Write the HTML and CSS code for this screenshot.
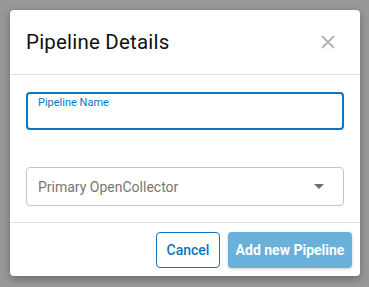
FILE: index.html
```html
<!DOCTYPE html>
<html lang="en">
<head>
  <meta charset="UTF-8" />
  <meta name="viewport" content="width=device-width, initial-scale=1.0"/>
  <title>Pipeline Details</title>
  <link rel="stylesheet" href="styles.css">
</head>
<body>
  <div class="dialog">
    <header class="dialog-header">
      <h2>Pipeline Details</h2>
      <button class="close-btn" aria-label="Close">
        <svg width="14" height="14" viewBox="0 0 14 14">
          <path d="M1 1 L13 13 M13 1 L1 13" stroke="#b3b3b3" stroke-width="1.8" fill="none"/>
        </svg>
      </button>
    </header>

    <div class="dialog-body">
      <div class="field">
        <label class="field-label">Pipeline Name</label>
        <input type="text" class="field-input"/>
      </div>

      <div class="select">
        <span class="select-text">Primary OpenCollector</span>
        <span class="caret"></span>
      </div>
    </div>

    <footer class="dialog-footer">
      <button class="btn btn-outline">Cancel</button>
      <button class="btn btn-primary">Add new Pipeline</button>
    </footer>
  </div>
</body>
</html>
```

FILE: styles.css
```css
:root {
  --primary-color: #0b76c1;
  --primary-light: #69b0db;
  --divider: #e0e0e0;
}

* {
  box-sizing: border-box;
  margin: 0;
  padding: 0;
  font-family: Roboto, 'Liberation Sans', sans-serif;
}

body {
  background-color: #989898;
  padding: 10px;
}

.dialog {
  width: 350px;
  height: 266px;
  background-color: white;
  border-radius: 4px;
  box-shadow: 0 3px 8px rgba(0,0,0,0.3);
  display: flex;
  flex-direction: column;
  overflow: hidden;
}

.dialog-header {
  display: flex;
  justify-content: space-between;
  align-items: center;
  height: 65px;
  padding: 0 25px 1px 16px;
  border-bottom: 1px solid var(--divider);
}

.dialog-header h2 {
  font-size: 20.5px;
  font-weight: 400;
  color: #111;
  letter-spacing: 0.2px;
}

.close-btn {
  background: none;
  border: none;
  display: flex;
  cursor: pointer;
}

.dialog-body {
  padding: 17px 16px 16px;
  display: flex;
  flex-direction: column;
  gap: 37px;
  border-bottom: 1px solid var(--divider);
}

.field {
  height: 38px;
  border: 2px solid var(--primary-color);
  border-radius: 4px;
  display: flex;
  flex-direction: column;
  padding: 2px 10px 0;
}

.field-label {
  font-size: 11px;
  color: var(--primary-color);
  line-height: 14px;
}

.field-input {
  border: none;
  outline: none;
  font-size: 14px;
  height: 16px;
  background: transparent;
}

.select {
  height: 39px;
  border: 1px solid #c4c4c4;
  border-radius: 4px;
  display: flex;
  align-items: center;
  justify-content: space-between;
  padding: 0 19px 0 11px;
}

.select-text {
  font-size: 14px;
  color: #767676;
}

.caret {
  width: 0;
  height: 0;
  border-left: 5px solid transparent;
  border-right: 5px solid transparent;
  border-top: 5px solid #6f6f6f;
}

.dialog-footer {
  flex: 1;
  display: flex;
  justify-content: flex-end;
  align-items: center;
  gap: 8px;
  padding: 0 8px;
}

.btn {
  height: 36px;
  border-radius: 4px;
  font-size: 14px;
  font-weight: 500;
  cursor: pointer;
  padding: 0;
  white-space: nowrap;
}

.btn-outline {
  background: white;
  color: var(--primary-color);
  border: 1px solid var(--primary-color);
  width: 64px;
}

.btn-primary {
  background-color: var(--primary-light);
  color: white;
  border: none;
  width: 124px;
  font-weight: 700;
  box-shadow: 0 1px 3px rgba(0,0,0,0.2);
}
```
